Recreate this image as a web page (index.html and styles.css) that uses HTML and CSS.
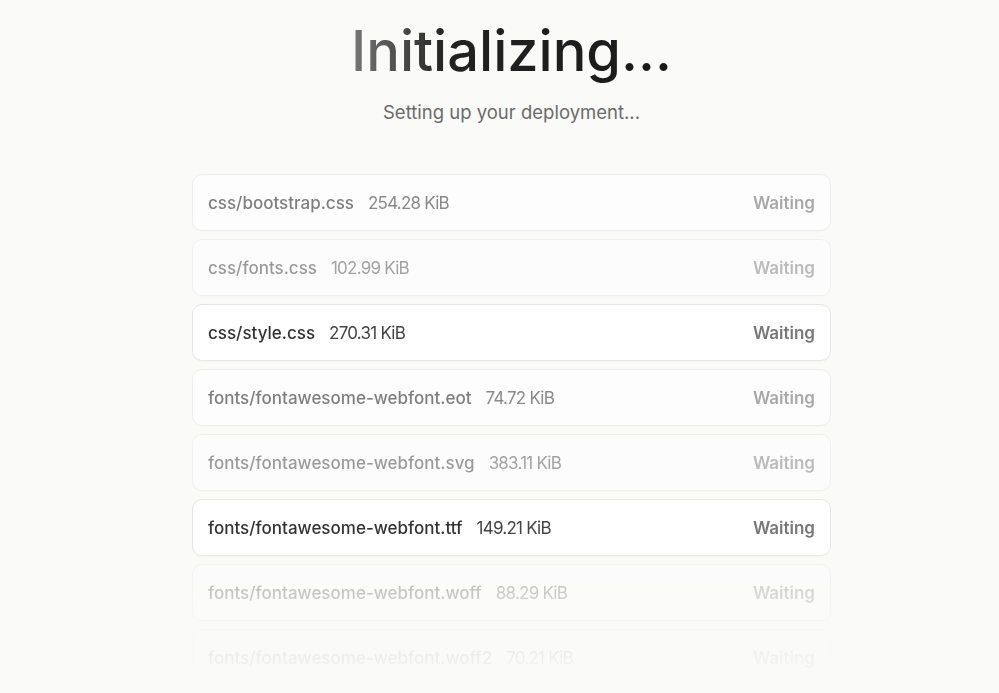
FILE: index.html
```html
<!DOCTYPE html>
<html lang="en">
<head>
  <meta charset="UTF-8">
  <meta name="viewport" content="width=device-width, initial-scale=1.0">
  <title>Initializing...</title>
  <link rel="stylesheet" href="styles.css">
</head>
<body>
  <main class="deploy">
    <header class="deploy-head">
      <h1 class="deploy-title">Initializing...</h1>
      <p class="deploy-sub">Setting up your deployment...</p>
    </header>

    <ul class="files">
      <li class="file dim-2">
        <span class="file-name">css/bootstrap.css</span>
        <span class="file-size">254.28 KiB</span>
        <span class="file-state">Waiting</span>
      </li>
      <li class="file dim-3">
        <span class="file-name">css/fonts.css</span>
        <span class="file-size">102.99 KiB</span>
        <span class="file-state">Waiting</span>
      </li>
      <li class="file active">
        <span class="file-name">css/style.css</span>
        <span class="file-size">270.31 KiB</span>
        <span class="file-state">Waiting</span>
      </li>
      <li class="file dim-2">
        <span class="file-name">fonts/fontawesome-webfont.eot</span>
        <span class="file-size">74.72 KiB</span>
        <span class="file-state">Waiting</span>
      </li>
      <li class="file dim-3">
        <span class="file-name">fonts/fontawesome-webfont.svg</span>
        <span class="file-size">383.11 KiB</span>
        <span class="file-state">Waiting</span>
      </li>
      <li class="file active">
        <span class="file-name">fonts/fontawesome-webfont.ttf</span>
        <span class="file-size">149.21 KiB</span>
        <span class="file-state">Waiting</span>
      </li>
      <li class="file dim-4">
        <span class="file-name">fonts/fontawesome-webfont.woff</span>
        <span class="file-size">88.29 KiB</span>
        <span class="file-state">Waiting</span>
      </li>
      <li class="file dim-5">
        <span class="file-name">fonts/fontawesome-webfont.woff2</span>
        <span class="file-size">70.21 KiB</span>
        <span class="file-state">Waiting</span>
      </li>
    </ul>
  </main>
</body>
</html>
```

FILE: styles.css
```css
html, body {
  margin: 0;
  height: 100%;
  overflow: hidden;
}
body {
  background: #fafaf9;
  font-family: Inter, "Noto Sans", sans-serif;
  color: #333;
}
.deploy {
  display: flex;
  flex-direction: column;
  align-items: center;
  padding: 18px 0 0 24px;
}
.deploy-head {
  text-align: center;
}
.deploy-title {
  margin: 0;
  font-size: 56px;
  line-height: 1.2;
  font-weight: 500;
  background: linear-gradient(90deg, #777 0%, #222 30%, #1a1a1a 100%);
  -webkit-background-clip: text;
  background-clip: text;
  color: transparent;
}
.deploy-sub {
  margin: 16px 0 0;
  font-size: 18.5px;
  color: #6b6b6b;
}

/* file list, fades out toward the bottom */
.files {
  list-style: none;
  margin: 51px 0 0;
  padding: 0;
  width: 639px;
  display: flex;
  flex-direction: column;
  gap: 8px;
  -webkit-mask-image: linear-gradient(to bottom, #000 72%, transparent 100%);
  mask-image: linear-gradient(to bottom, #000 72%, transparent 100%);
}
.file {
  display: flex;
  align-items: center;
  height: 55px;
  padding: 0 15px;
  background: #fff;
  border: 1px solid #e6e6e4;
  border-radius: 10px;
  box-shadow: 0 1px 2px rgba(0, 0, 0, 0.03);
}
.file-name {
  font-size: 17px;
  font-weight: 500;
  color: #333;
}
.file-size {
  margin-left: 14px;
  font-size: 17px;
  letter-spacing: -0.045em;
  color: #444;
}
.file-state {
  margin-left: auto;
  font-weight: 600;
  font-size: 17px;
  color: #777;
}
.dim-2 { opacity: 0.62; }
.dim-3 { opacity: 0.48; }
.dim-4 { opacity: 0.4; }
.dim-5 { opacity: 0.3; }
```
